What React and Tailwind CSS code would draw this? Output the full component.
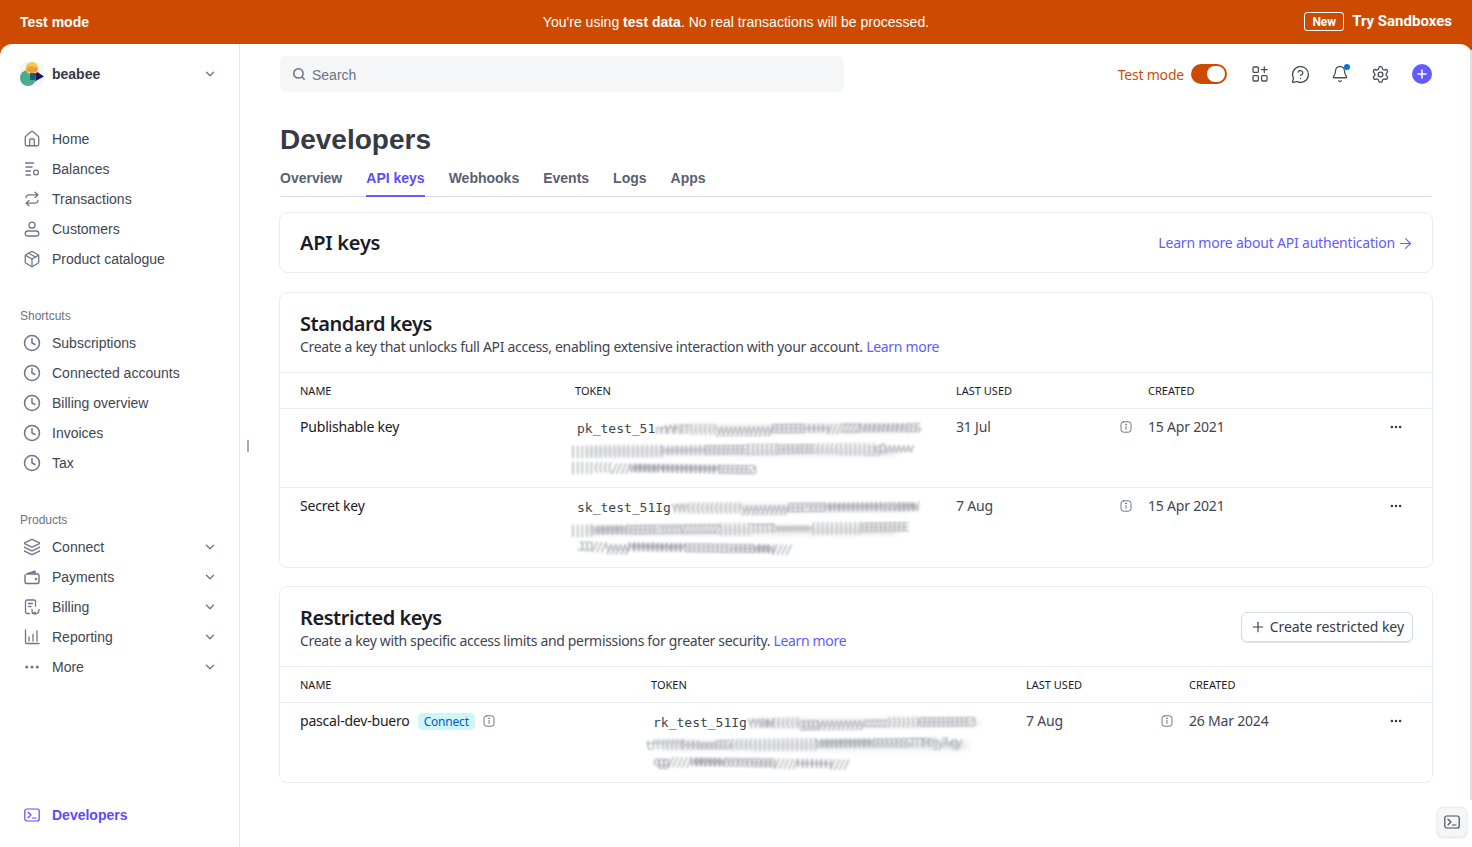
import { Home, Package, Clock, Layers, ChevronDown, Ellipsis, MessageCircleQuestion, Bell, Settings, Plus, Search, ArrowRight } from 'lucide-react';

const ubuntu = "font-['Noto_Sans',sans-serif]";

function Balances({ className }) {
  return (
    <svg viewBox="0 0 16 16" fill="none" stroke="currentColor" strokeWidth="1.3" strokeLinecap="round" className={className}>
      <path d="M1.5 2h8M2 6h6M2 10h4.5M2 14h4.5" />
      <circle cx="12" cy="11.5" r="2.4" />
    </svg>
  );
}

function Transfers({ className }) {
  return (
    <svg viewBox="0 0 16 16" fill="none" stroke="currentColor" strokeWidth="1.3" strokeLinecap="round" strokeLinejoin="round" className={className}>
      <path d="M11 1.2l3 2.6-3 2.6M14 3.8H5a3 3 0 0 0-3 3" />
      <path d="M5 14.8l-3-2.6 3-2.6M2 12.2h9a3 3 0 0 0 3-3" />
    </svg>
  );
}

function Person({ className }) {
  return (
    <svg viewBox="0 0 16 16" fill="none" stroke="currentColor" strokeWidth="1.3" strokeLinejoin="round" className={className}>
      <circle cx="8" cy="4.2" r="3" />
      <rect x="1.2" y="10" width="13.6" height="5" rx="2.5" />
    </svg>
  );
}

function Wallet({ className }) {
  return (
    <svg viewBox="0 0 16 16" fill="none" stroke="currentColor" strokeWidth="1.4" strokeLinejoin="round" className={className}>
      <path d="M1 5.5V13a1.5 1.5 0 0 0 1.5 1.5h11A1.5 1.5 0 0 0 15 13V6.5A1.5 1.5 0 0 0 13.5 5H2.5L11 2.2V5" />
      <circle cx="12" cy="10" r="0.5" fill="currentColor" />
    </svg>
  );
}

function BillingIcon({ className }) {
  return (
    <svg viewBox="0 0 16 16" fill="none" stroke="currentColor" strokeWidth="1.3" strokeLinecap="round" strokeLinejoin="round" className={className}>
      <path d="M5.5 14.5H3A1.5 1.5 0 0 1 1.5 13V2.5A1.5 1.5 0 0 1 3 1h7a1.5 1.5 0 0 1 1.5 1.5V7" />
      <path d="M4.5 4.5h4M4.5 7.5h2.5" />
      <path d="M15 10.5a4 4 0 0 1-6.5 3.6M8 10.5l.3 3.8 3-.8" />
    </svg>
  );
}

function Chart({ className }) {
  return (
    <svg viewBox="0 0 16 16" fill="none" stroke="currentColor" strokeWidth="1.3" strokeLinecap="round" className={className}>
      <path d="M1.5 1v12.5a1 1 0 0 0 1 1H15" />
      <path d="M5 8v4M9 5.5V12M13 2v10" />
    </svg>
  );
}

function TerminalBox({ className }) {
  return (
    <svg viewBox="0 0 16 16" fill="none" stroke="currentColor" strokeWidth="1.2" strokeLinecap="round" strokeLinejoin="round" className={className}>
      <rect x="0.8" y="2" width="14.4" height="12" rx="2" />
      <path d="M4 5.2L7 8l-3 2.8M8.5 11H12" />
    </svg>
  );
}

function Apps({ className }) {
  return (
    <svg viewBox="0 0 16 16" fill="none" stroke="currentColor" strokeWidth="1.3" strokeLinecap="round" className={className}>
      <rect x="1" y="1" width="5.4" height="5.4" rx="1" />
      <rect x="1" y="9.6" width="5.4" height="5.4" rx="1" />
      <rect x="9.6" y="9.6" width="5.4" height="5.4" rx="1" />
      <path d="M12.3 0.8v5.8M9.4 3.7h5.8" />
    </svg>
  );
}

// rounded square with an i, next to dates and restricted key names
function KeyInfo({ className }) {
  return (
    <svg viewBox="0 0 12 12" fill="none" stroke="currentColor" strokeWidth="1" strokeLinecap="round" className={className}>
      <rect x="1" y="0.8" width="10" height="10.4" rx="2.6" />
      <path d="M6 5.4v3" />
      <circle cx="6" cy="3.4" r="0.4" fill="currentColor" />
    </svg>
  );
}

function Logo() {
  return (
    <div className="w-6 h-6 rounded-md bg-[#f5f6f8] overflow-hidden">
      <svg viewBox="0 0 24 24" className="w-6 h-6">
        <path d="M13 7l11 7.5-11 6z" fill="#1c1464" />
        <circle cx="8" cy="16" r="8" fill="#4cab8f" />
        <circle cx="12" cy="6.5" r="6.5" fill="#f6c94e" />
        <ellipse cx="12" cy="7.5" rx="5.5" ry="3.2" fill="#ee9a48" />
        <path d="M10 11h5.5v7H10z" fill="#17607a" />
      </svg>
    </div>
  );
}

function NavItem({ icon: Icon, label, arrow, strokeWidth, lucide }) {
  return (
    <div className="h-[30px] flex items-center pl-1">
      <Icon className={lucide ? 'w-[18px] h-[18px] -mx-px text-[#6c7688] shrink-0' : 'w-4 h-4 text-[#6c7688] shrink-0'} strokeWidth={strokeWidth} />
      <span className="ml-3 text-sm text-[#414552]">{label}</span>
      {arrow && <ChevronDown className="ml-auto w-3.5 h-3.5 text-[#6c7688]" strokeWidth={2.2} />}
    </div>
  );
}

const mainNav = [
  { icon: Home, label: 'Home', strokeWidth: 1.7, lucide: true },
  { icon: Balances, label: 'Balances' },
  { icon: Transfers, label: 'Transactions' },
  { icon: Person, label: 'Customers' },
  { icon: Package, label: 'Product catalogue', strokeWidth: 1.7, lucide: true },
];

const shortcuts = ['Subscriptions', 'Connected accounts', 'Billing overview', 'Invoices', 'Tax'];

const products = [
  { icon: Layers, label: 'Connect', strokeWidth: 1.7, lucide: true },
  { icon: Wallet, label: 'Payments' },
  { icon: BillingIcon, label: 'Billing' },
  { icon: Chart, label: 'Reporting' },
  { icon: Ellipsis, label: 'More', strokeWidth: 2, lucide: true },
];

function Sidebar() {
  return (
    <aside className="w-[240px] shrink-0 border-r border-[#e6e8ec] pl-5 pr-[22px] flex flex-col">
      <div className="h-[60px] flex items-center">
        <Logo />
        <span className="ml-2 text-sm font-bold text-[#353a44]">beabee</span>
        <ChevronDown className="ml-auto w-3.5 h-3.5 text-[#6c7688]" strokeWidth={2.2} />
      </div>
      <nav className="mt-[20px]">
        {mainNav.map((item) => <NavItem key={item.label} {...item} />)}
      </nav>
      <div className="mt-[32px] h-[20px] text-xs text-[#6a7383] flex items-center">Shortcuts</div>
      <div className="mt-[2px]">
        {shortcuts.map((label) => <NavItem key={label} icon={Clock} label={label} strokeWidth={2} lucide />)}
      </div>
      <div className="mt-[32px] h-[20px] text-xs text-[#6a7383] flex items-center">Products</div>
      <div className="mt-[2px]">
        {products.map((item) => <NavItem key={item.label} {...item} arrow />)}
      </div>
      <div className="mt-auto mb-[17px] h-[30px] flex items-center pl-1 text-[#5a4bff]">
        <TerminalBox className="w-4 h-4" />
        <span className="ml-3 text-sm font-bold">Developers</span>
      </div>
    </aside>
  );
}

function TopIcon({ children }) {
  return <div className="w-10 flex items-center justify-center text-[#474e5a]">{children}</div>;
}

function TopBar() {
  return (
    <div className="h-[48px] mt-3 flex items-start">
      <div className="w-[564px] h-9 rounded-md bg-[#f5f6f8] flex items-center pl-3 pt-px text-sm text-[#6a7383]">
        <Search className="w-3.5 h-3.5 -mt-px" strokeWidth={2.6} />
        <span className="ml-[6px]">Search</span>
      </div>
      <div className="ml-auto h-9 flex items-center">
        <span className={`${ubuntu} text-sm text-[#c84e0a] tracking-[-0.2px] pt-px`}>Test mode</span>
        <div className="ml-[7px] w-9 h-5 rounded-full bg-[#cc4b00] p-0.5 flex justify-end">
          <div className="w-[18px] h-4 rounded-full bg-white" />
        </div>
        <div className="ml-[13px] flex items-center">
          <TopIcon><Apps className="w-4 h-4" /></TopIcon>
          <TopIcon><MessageCircleQuestion className="w-[19px] h-[19px]" strokeWidth={1.7} /></TopIcon>
          <TopIcon>
            <div className="relative w-[18px] h-[18px]">
              <Bell className="w-[18px] h-[18px]" strokeWidth={1.7} />
              <span className="absolute -top-[1px] -right-[1px] w-[6px] h-[6px] rounded-full bg-[#0570de]" />
            </div>
          </TopIcon>
          <TopIcon><Settings className="w-[19px] h-[19px]" strokeWidth={1.7} /></TopIcon>
        </div>
        <div className="ml-3 w-5 h-5 rounded-full bg-[#635bff] flex items-center justify-center">
          <Plus className="w-3.5 h-3.5 text-white" strokeWidth={2.6} />
        </div>
      </div>
    </div>
  );
}

function Tabs() {
  const tabs = ['Overview', 'API keys', 'Webhooks', 'Events', 'Logs', 'Apps'];
  return (
    <div className="flex gap-6 border-b border-[#d5dbe5] h-[35px] mt-[4px]">
      {tabs.map((tab) => (
        <div
          key={tab}
          className={`h-[35px] pt-[6px] text-sm font-bold ${tab === 'API keys' ? 'text-[#5a4bff] border-b-2 border-[#635bff]' : 'text-[#596171]'}`}
        >
          {tab}
        </div>
      ))}
    </div>
  );
}

function Smear({ text, className }) {
  return (
    <div className={`whitespace-nowrap tracking-[-3.2px] text-[#9a9ea5] blur-[1px] ${className}`}>{text}</div>
  );
}

function Token({ prefix, tail, line2, line3, offset3 }) {
  return (
    <div className="relative font-['DejaVu_Sans_Mono',monospace] text-[13px] leading-[20px] text-[#414552] mt-[2px]">
      <div className="flex h-[21px] whitespace-nowrap">
        <span>{prefix}</span>
        <Smear text={tail} className="-rotate-[0.4deg]" />
      </div>
      <Smear text={line2} className="h-[20px] -ml-[8px] -rotate-[0.6deg]" />
      <Smear text={line3} className={`h-[20px] rotate-[0.8deg] ${offset3}`} />
      <div className="absolute left-[100px] right-[8px] top-[8px] h-[4px] bg-[#c9ccd1] blur-[3px] opacity-70" />
      <div className="absolute left-[10px] right-[20px] top-[30px] h-[5px] bg-[#c9ccd1] blur-[3px] opacity-80" />
    </div>
  );
}

function Th({ children }) {
  return <div className={`${ubuntu} text-[11px] uppercase text-[#1a1b25] pt-[2px]`}>{children}</div>;
}

function Row({ cols, name, token, last, created, rowClass }) {
  return (
    <div className={`grid ${cols} border-t border-[#ebeef1] ${rowClass} ${ubuntu} text-sm tracking-[-0.2px] pt-[8px]`}>
      <div className="text-[#1a1b25] flex items-start">{name}</div>
      <div className="pr-[39px] min-w-0 pl-[2px] tracking-normal">{token}</div>
      <div className="text-[#414552] flex justify-between items-start pr-4">
        <span>{last}</span>
        <KeyInfo className="w-3 h-3 mt-1 text-[#6c7688]" />
      </div>
      <div className="text-[#414552] flex justify-between items-start pr-[29px]">
        <span>{created}</span>
        <Ellipsis className="w-3.5 h-3.5 mt-[3px] text-[#353a44]" strokeWidth={2.4} />
      </div>
    </div>
  );
}

const standardCols = 'grid-cols-[275px_381px_192px_1fr] pl-5';
const restrictedCols = 'grid-cols-[351px_375px_163px_1fr] pl-5';

function App() {
  return (
    <div className="h-[847px] bg-[#cc4b00] overflow-hidden font-['Liberation_Sans',sans-serif] relative">
      <header className="h-[44px] px-5 flex items-center justify-between text-white text-sm">
        <span className="font-bold w-[300px]">Test mode</span>
        <span className="tracking-[0.02px]">You're using <b>test data</b>. No real transactions will be processed.</span>
        <div className="w-[300px] flex items-center justify-end font-['Roboto',sans-serif] font-bold">
          <span className="border border-white rounded-[3px] text-xs px-[7px] h-[19px] flex items-center">New</span>
          <span className="ml-2 text-[15px]">Try Sandboxes</span>
        </div>
      </header>

      <div className="h-[803px] bg-white rounded-t-xl flex">
        <Sidebar />
        <main className="flex-1 px-10 relative">
          <TopBar />
          <h1 className="text-[28px] leading-[36px] font-bold text-[#353a44] mt-[18px]">Developers</h1>
          <Tabs />

          <section className={`${ubuntu} mt-[15px] h-[61px] rounded-lg border border-[#ebeef1] -mx-px px-5 pt-px flex items-center justify-between`}>
            <h2 className="text-xl font-semibold text-[#1a1b25] tracking-[-0.25px]">API keys</h2>
            <span className="flex items-center text-sm text-[#635bff] tracking-[-0.2px]">
              Learn more about API authentication
              <ArrowRight className="ml-0.5 w-[17px] h-[17px] -mr-[2px]" strokeWidth={1.5} />
            </span>
          </section>

          <section className="mt-[19px] rounded-lg border border-[#ebeef1] -mx-px">
            <div className={`${ubuntu} h-[79px] px-5 pt-[18px]`}>
              <h2 className="text-xl leading-[26px] font-semibold text-[#1a1b25] tracking-[-0.45px]">Standard keys</h2>
              <p className="text-sm leading-[20px] text-[#414552] tracking-[-0.31px]">
                Create a key that unlocks full API access, enabling extensive interaction with your account. <span className="text-[#635bff]">Learn more</span>
              </p>
            </div>
            <div className={`grid ${standardCols} h-[36px] items-center border-t border-[#ebeef1]`}>
              <Th>Name</Th><Th>Token</Th><Th>Last used</Th><Th>Created</Th>
            </div>
            <Row
              cols={standardCols}
              rowClass="h-[79px]"
              name="Publishable key"
              last="31 Jul"
              created="15 Apr 2021"
              token={<Token prefix="pk_test_51" tail="nnYYhTT((((((yyyyyyyyyyyyEEEEEEEHHHHH///ZZZZNNNNNNNNNNSSS" line2="||||||||||||||||||||HHHHHHHHHEEEEEEEEE[[[[[[[EEEEEEEE(((((||||||jjgQvvvvvv" line3="|||||((((////WWWWWWMMMMMMMMMMMMMSSSSSSS3" offset3="-ml-[8px]" />}
            />
            <Row
              cols={standardCols}
              rowClass="h-[80px]"
              name="Secret key"
              last="7 Aug"
              created="15 Apr 2021"
              token={<Token prefix="sk_test_51Ig" tail="YYY((((((((((((yyyyyyyyyyEEEE5555MMMMMMMMMMMMNNNWWWWW" line2="|||||WWWWWWWEEEEEEE33333ZZZZZZZZ|||||||TTTTT>>>>>>>>|||||||||||EEEEEEEEEE" line3="JJJ///yyyyyMMMMMMMMMMMMSSSSSSSSSS88888WWWW////" offset3="" />}
            />
          </section>

          <section className="mt-[18px] rounded-lg border border-[#ebeef1] -mx-px">
            <div className={`${ubuntu} h-[79px] px-5 pt-[18px] flex justify-between`}>
              <div>
                <h2 className="text-xl leading-[26px] font-semibold text-[#1a1b25] tracking-[-0.45px]">Restricted keys</h2>
                <p className="text-sm leading-[20px] text-[#414552] tracking-[-0.33px]">
                  Create a key with specific access limits and permissions for greater security. <span className="text-[#635bff]">Learn more</span>
                </p>
              </div>
              <button className="mt-[7px] -mr-px h-[30px] rounded-md border border-[#d5dbe1] shadow-[0_1px_1px_rgba(0,0,0,0.12)] px-2 flex items-center text-sm text-[#353a44] tracking-[-0.05px]">
                <Plus className="w-4 h-4 mr-[4px]" strokeWidth={1.7} />
                Create restricted key
              </button>
            </div>
            <div className={`grid ${restrictedCols} h-[36px] items-center border-t border-[#ebeef1]`}>
              <Th>Name</Th><Th>Token</Th><Th>Last used</Th><Th>Created</Th>
            </div>
            <Row
              cols={restrictedCols}
              rowClass="h-[80px]"
              name={
                <>
                  <span>pascal-dev-buero</span>
                  <span className="ml-2 h-[17px] px-[6px] mt-[2px] rounded-[5px] bg-[#cff5f6] text-[#045ad0] text-xs flex items-center">Connect</span>
                  <KeyInfo className="ml-2 w-3 h-3 mt-1 text-[#6c7688]" />
                </>
              }
              last="7 Aug"
              created="26 Mar 2024"
              token={<Token prefix="rk_test_51Ig" tail="YYYWW((((((ggggyyyyyyyyyyzzzzz)))))))EEEEEEEEEEE3" line2="tfffffffHHHeeeeGGG(((((||||||||||||||WWWWWWWWWWWW99999SSSTTTR0jy7wgy" line3="qgg/////WWWWWWW00000088888/////HHHHHHH////" offset3="" />}
            />
          </section>
        </main>
      </div>

      <div className="absolute left-[247px] top-[440px] w-[1.5px] h-3 bg-[#a3acb9]" />
      <div className="absolute right-0 top-[50px] w-[2px] h-[750px] bg-[#dcdfe3]" />
      <div className="absolute left-[1437px] top-[807px] w-[30px] h-[30px] rounded-md bg-[#f5f6f8] border border-[#ebeef1] shadow-sm flex items-center justify-center text-[#474e5a]">
        <TerminalBox className="w-4 h-4" />
      </div>
    </div>
  );
}

export default App;
